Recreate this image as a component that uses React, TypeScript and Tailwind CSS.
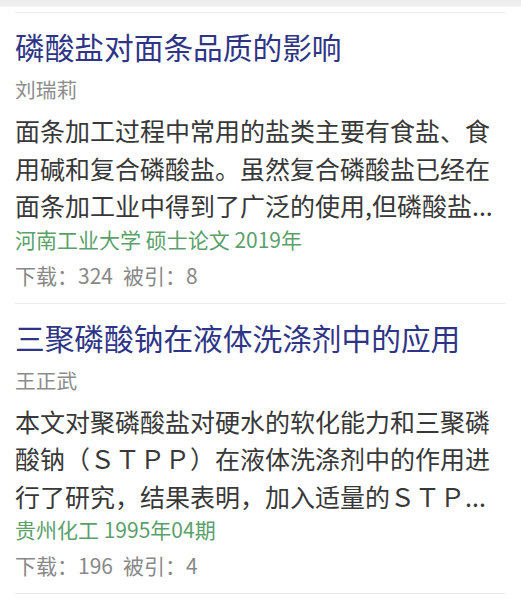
import React from "react";

interface Paper {
  title: string;
  author: string;
  abstract: string;
  source: string;
  downloads: number;
  cited: number;
}

const papers: Paper[] = [
  {
    title: "磷酸盐对面条品质的影响",
    author: "刘瑞莉",
    abstract:
      "面条加工过程中常用的盐类主要有食盐、食用碱和复合磷酸盐。虽然复合磷酸盐已经在面条加工业中得到了广泛的使用,但磷酸盐...",
    source: "河南工业大学 硕士论文 2019年",
    downloads: 324,
    cited: 8,
  },
  {
    title: "三聚磷酸钠在液体洗涤剂中的应用",
    author: "王正武",
    abstract:
      "本文对聚磷酸盐对硬水的软化能力和三聚磷酸钠（ＳＴＰＰ）在液体洗涤剂中的作用进行了研究，结果表明，加入适量的ＳＴＰ...",
    source: "贵州化工 1995年04期",
    downloads: 196,
    cited: 4,
  },
];

const PaperItem = ({ paper }: { paper: Paper }) => {
  return (
    <article className="mx-[15px] border-t border-[#ececec] pt-[14px] pb-[14px]">
      <h2 className="text-[29.7px] leading-[40px] text-[#2e3586] font-normal whitespace-nowrap">
        {paper.title}
      </h2>
      <p className="mt-[8px] text-[20.7px] leading-[28px] text-[#8c8c8c]">{paper.author}</p>
      <p className="mt-[9px] text-[25px] leading-[37.5px] text-[#383838]">{paper.abstract}</p>
      <p className="mt-0 text-[21px] leading-[28px] text-[#5b9f6b]">{paper.source}</p>
      <p className="mt-[8px] text-[21px] leading-[28px] text-[#888888]">
        <span>下载：{paper.downloads}</span>
        <span className="ml-[10px]">被引：{paper.cited}</span>
      </p>
    </article>
  );
};

export default function App() {
  return (
    <div
      className="w-[521px] h-[600px] overflow-hidden bg-white"
      style={{ fontFamily: '"Noto Sans CJK SC", "Noto Sans", sans-serif' }}
    >
      <div className="h-[7px] bg-gradient-to-b from-[#ebebeb] to-[#f3f3f3]" />
      <div className="h-[5px]" />
      {papers.map((p) => (
        <PaperItem key={p.title} paper={p} />
      ))}
      <div className="mx-[15px] border-t border-[#ececec]" />
    </div>
  );
}
